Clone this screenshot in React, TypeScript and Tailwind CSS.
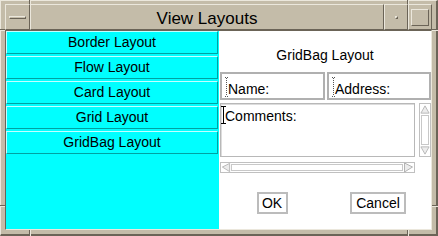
import React from "react";

const raised =
  "box-border border border-t-[#ebe7dc] border-l-[#ebe7dc] border-b-[#6b6457] border-r-[#6b6457]";

function CyanButton({ label }: { label: string }) {
  return (
    <div className="box-border h-[23px] w-[212px] border border-t-[#c4ffff] border-l-[#c4ffff] border-b-[#00a2a2] border-r-[#00a2a2] bg-[#00ffff] flex items-center justify-center pb-px text-[14px] leading-[16px] text-black">
      {label}
    </div>
  );
}

function DottedBeam() {
  return (
    <svg className="absolute left-[3px] top-[3px]" width="4" height="20" viewBox="0 0 4 20">
      <path d="M0 0.5H4M0 19.5H4" stroke="#555" strokeWidth="1" strokeDasharray="1 1" />
      <path d="M1.5 1V19" stroke="#555" strokeWidth="1" strokeDasharray="1 1" />
    </svg>
  );
}

function Arrow({ dir }: { dir: "up" | "down" | "left" | "right" }) {
  const pts: Record<string, string> = {
    up: "5.5,1.5 10,9.5 1,9.5",
    down: "1,1.5 10,1.5 5.5,9.5",
    left: "1.5,5 9.5,1 9.5,10",
    right: "1.5,1 9.5,5 1.5,10",
  };
  return (
    <svg width="11" height="11" viewBox="0 0 11 11" className="block">
      <polygon points={pts[dir]} fill="#ececec" stroke="#b4b4b4" strokeWidth="1" />
    </svg>
  );
}

export default function App() {
  const dark = "bg-[#6b6457]";
  const light = "bg-[#ebe7dc]";
  return (
    <div className="relative box-border w-[438px] h-[236px] bg-[#c4bca9] border-t border-l border-t-[#ebe7dc] border-l-[#ebe7dc] border-r-2 border-b-2 border-r-[#6b6457] border-b-[#6b6457] pt-[3px] pb-[4px] pl-[4px] pr-[4px] flex flex-col font-['Liberation_Sans',Arial,sans-serif] text-black">
      {/* title bar */}
      <div className="flex h-[26px] shrink-0">
        <div className={`${raised} w-[25px] flex items-center justify-center`}>
          <div className="box-border w-[17px] h-[3px] border border-t-[#ebe7dc] border-l-[#ebe7dc] border-b-[#6b6457] border-r-[#6b6457]" />
        </div>
        <div className={`${raised} flex-1 pt-[4px] text-center text-[17px] leading-[20px]`}>
          View Layouts
        </div>
        <div className={`${raised} w-[24px] flex items-center justify-center`}>
          <div className="box-border w-[3px] h-[3px] border border-t-[#ebe7dc] border-l-[#ebe7dc] border-b-[#6b6457] border-r-[#6b6457]" />
        </div>
        <div className={`${raised} w-[24px] flex items-center justify-center`}>
          <div className="box-border w-[18px] h-[17px] border border-t-[#ebe7dc] border-l-[#ebe7dc] border-b-[#6b6457] border-r-[#6b6457]" />
        </div>
      </div>

      {/* client area */}
      <div className="box-border h-[200px] shrink-0 border border-t-[#6b6457] border-l-[#6b6457] border-b-[#ebe7dc] border-r-[#ebe7dc] flex">
        <div className="w-[213px] bg-[#00ffff] flex flex-col gap-[2px]">
          <CyanButton label="Border Layout" />
          <CyanButton label="Flow Layout" />
          <CyanButton label="Card Layout" />
          <CyanButton label="Grid Layout" />
          <CyanButton label="GridBag Layout" />
        </div>
        <div className="flex-1 bg-white flex flex-col text-[14px] leading-[16px]">
          <div className="mt-[16px] h-[16px] text-center">GridBag Layout</div>

          <div className="mt-[9px] ml-px flex gap-[2px] h-[28px]">
            <div className="relative box-border w-[105px] h-[28px] border-2 border-[#b0b0b0] pl-[6px] pt-[7px]">
              <DottedBeam />
              Name:
            </div>
            <div className="relative box-border w-[104px] h-[28px] border-2 border-[#b0b0b0] pl-[6px] pt-[7px]">
              <DottedBeam />
              Address:
            </div>
          </div>

          <div className="mt-[3px] ml-px flex h-[54px]">
            <div className="relative box-border w-[195px] h-[54px] border border-[#b8b8b8] shadow-[inset_1px_1px_0_#dcdcdc] pl-[4px] pt-[4px]">
              <svg className="absolute left-0 top-[2px]" width="5" height="18" viewBox="0 0 5 18">
                <path d="M0 0.5H5M2.5 0.5V17.5M0 17.5H5" stroke="#000" strokeWidth="1" />
              </svg>
              Comments:
            </div>
            <div className="ml-[4px] box-border w-[12px] h-[54px] border border-[#c0c0c0] flex flex-col">
              <div className="h-[11px] flex items-center justify-center">
                <Arrow dir="up" />
              </div>
              <div className="flex-1 box-border border border-[#c8c8c8] mx-px" />
              <div className="h-[11px] flex items-center justify-center">
                <Arrow dir="down" />
              </div>
            </div>
          </div>

          <div className="mt-[5px] ml-px box-border w-[195px] h-[11px] border border-[#c0c0c0] flex">
            <div className="w-[10px] flex items-center justify-center">
              <Arrow dir="left" />
            </div>
            <div className="flex-1 box-border border border-[#c8c8c8] my-px" />
            <div className="w-[11px] flex items-center justify-center">
              <Arrow dir="right" />
            </div>
          </div>

          <div className="mt-[19px] grid grid-cols-2 h-[22px]">
            <div className="flex justify-center">
              <div className="box-border w-[31px] h-[22px] border-2 border-[#bcbcbc] flex items-center justify-center">
                OK
              </div>
            </div>
            <div className="flex justify-center">
              <div className="box-border w-[56px] h-[22px] border-2 border-[#bcbcbc] flex items-center justify-center">
                Cancel
              </div>
            </div>
          </div>
        </div>
      </div>

      {/* resize corner marks */}
      <div className={`absolute left-[28px] top-[-1px] w-px h-[4px] ${dark}`} />
      <div className={`absolute left-[29px] top-[-1px] w-px h-[4px] ${light}`} />
      <div className={`absolute left-[406px] top-[-1px] w-px h-[4px] ${dark}`} />
      <div className={`absolute left-[407px] top-[-1px] w-px h-[4px] ${light}`} />
      <div className={`absolute left-[28px] bottom-[-2px] w-px h-[6px] ${dark}`} />
      <div className={`absolute left-[29px] bottom-[-2px] w-px h-[6px] ${light}`} />
      <div className={`absolute left-[406px] bottom-[-2px] w-px h-[6px] ${dark}`} />
      <div className={`absolute left-[407px] bottom-[-2px] w-px h-[6px] ${light}`} />
      <div className={`absolute left-[-1px] top-[28px] w-[5px] h-px ${dark}`} />
      <div className={`absolute left-[-1px] top-[29px] w-[5px] h-px ${light}`} />
      <div className={`absolute left-[-1px] top-[204px] w-[5px] h-px ${dark}`} />
      <div className={`absolute left-[-1px] top-[205px] w-[5px] h-px ${light}`} />
      <div className={`absolute right-[-2px] top-[28px] w-[6px] h-px ${dark}`} />
      <div className={`absolute right-[-2px] top-[29px] w-[6px] h-px ${light}`} />
      <div className={`absolute right-[-2px] top-[204px] w-[6px] h-px ${dark}`} />
      <div className={`absolute right-[-2px] top-[205px] w-[6px] h-px ${light}`} />
    </div>
  );
}
